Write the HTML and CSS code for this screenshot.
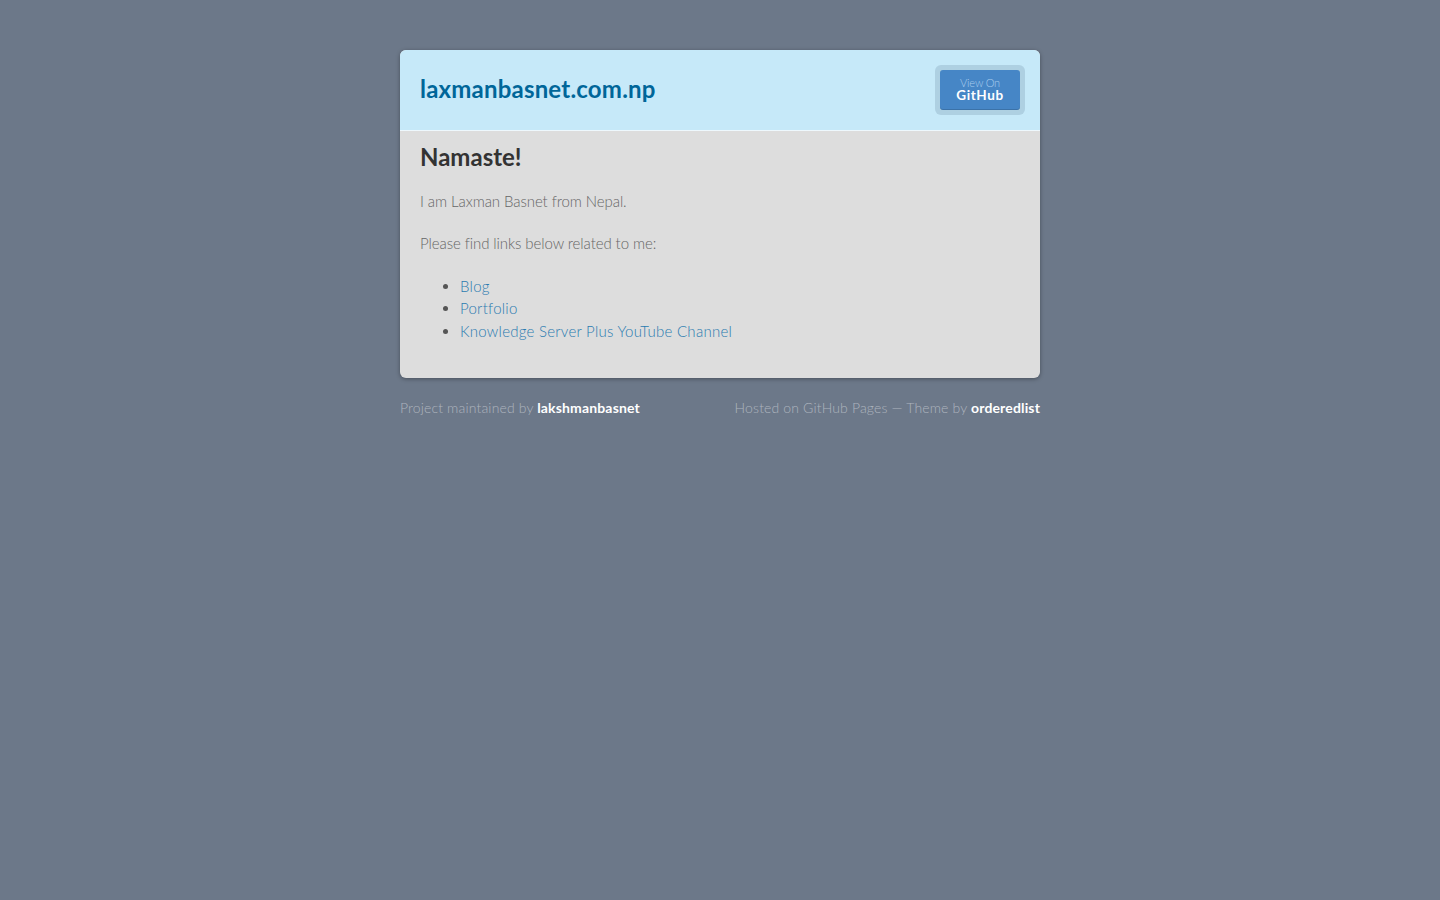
FILE: index.html
```html
<!DOCTYPE html>
<html lang="en">
<head>
<meta charset="utf-8">
<title>laxmanbasnet.com.np</title>
<link rel="stylesheet" href="styles.css">
</head>
<body>
<div class="wrapper">
  <div class="card">
    <header class="card-header">
      <h1 class="site-title"><a href="#">laxmanbasnet.com.np</a></h1>
      <a class="gh-button" href="#"><span class="gh-inner"><small>View On</small><strong>GitHub</strong></span></a>
    </header>
    <section class="card-body">
      <h2>Namaste!</h2>
      <p>I am Laxman Basnet from Nepal.</p>
      <p>Please find links below related to me:</p>
      <ul>
        <li><a href="#">Blog</a></li>
        <li><a href="#">Portfolio</a></li>
        <li><a href="#">Knowledge Server Plus YouTube Channel</a></li>
      </ul>
    </section>
  </div>
  <footer class="footer">
    <p>Project maintained by <a href="#">lakshmanbasnet</a></p>
    <p>Hosted on GitHub Pages &mdash; Theme by <a href="#">orderedlist</a></p>
  </footer>
</div>
</body>
</html>
```
FILE: styles.css
```css
html, body {
  margin: 0;
  padding: 0;
}
body {
  background: #6c7889;
  font-family: Lato, "Open Sans", sans-serif;
  font-weight: 300;
  color: #666;
}
.wrapper {
  width: 640px;
  margin: 0 auto;
  padding-top: 50px;
}
.card {
  border-radius: 6px;
  overflow: hidden;
  box-shadow: 0 1px 4px rgba(0,0,0,0.35);
  background: #dddddd;
}
.card-header {
  background: #c6e9f9;
  border-bottom: 1px solid #eef8fd;
  display: flex;
  align-items: center;
  justify-content: space-between;
  padding: 0 15px 0 20px;
  box-sizing: border-box;
  height: 81px;
}
.site-title {
  margin: 0;
  font-size: 24px;
  font-weight: 700;
  line-height: 1;
  letter-spacing: 0.2px;
  position: relative;
  top: -1px;
}
.site-title a {
  color: #006699;
  text-decoration: none;
}
.gh-button {
  display: block;
  padding: 5px;
  border-radius: 6px;
  background: #aed0e2;
  text-decoration: none;
  margin-top: -1px;
}
.gh-inner {
  display: flex;
  flex-direction: column;
  align-items: center;
  justify-content: center;
  width: 80px;
  height: 40px;
  box-sizing: border-box;
  background: #4686c6;
  border-radius: 3px;
  box-shadow: inset 0 -1px 0 rgba(0,0,0,0.15);
}
.gh-inner small {
  font-size: 11px;
  font-weight: 300;
  color: #a9cdee;
  line-height: 11px;
  letter-spacing: -0.2px;
}
.gh-inner strong {
  font-size: 13.5px;
  font-weight: 700;
  color: #ffffff;
  line-height: 14px;
  letter-spacing: 0.6px;
}
.card-body {
  padding: 12px 20px 20px;
}
.card-body h2 {
  margin: 0 0 18px;
  font-size: 24px;
  font-weight: 700;
  color: #333;
  line-height: 1.2;
}
.card-body p {
  margin: 0 0 20px;
  font-size: 15px;
  line-height: 22.5px;
  letter-spacing: -0.08px;
}
.card-body ul {
  margin: 0 0 16px;
  padding-left: 40px;
  font-size: 15px;
  line-height: 22.5px;
}
.card-body li::marker {
  color: #555;
}
.card-body a {
  color: #2a7bb0;
  letter-spacing: 0.26px;
  text-decoration: none;
}
.footer {
  display: flex;
  justify-content: space-between;
  padding-top: 21px;
  font-size: 14px;
  color: #adb4be;
  letter-spacing: 0.15px;
}
.footer p {
  margin: 0;
  line-height: 18px;
}
.footer a {
  color: #ffffff;
  font-weight: 700;
  text-decoration: none;
}
```
